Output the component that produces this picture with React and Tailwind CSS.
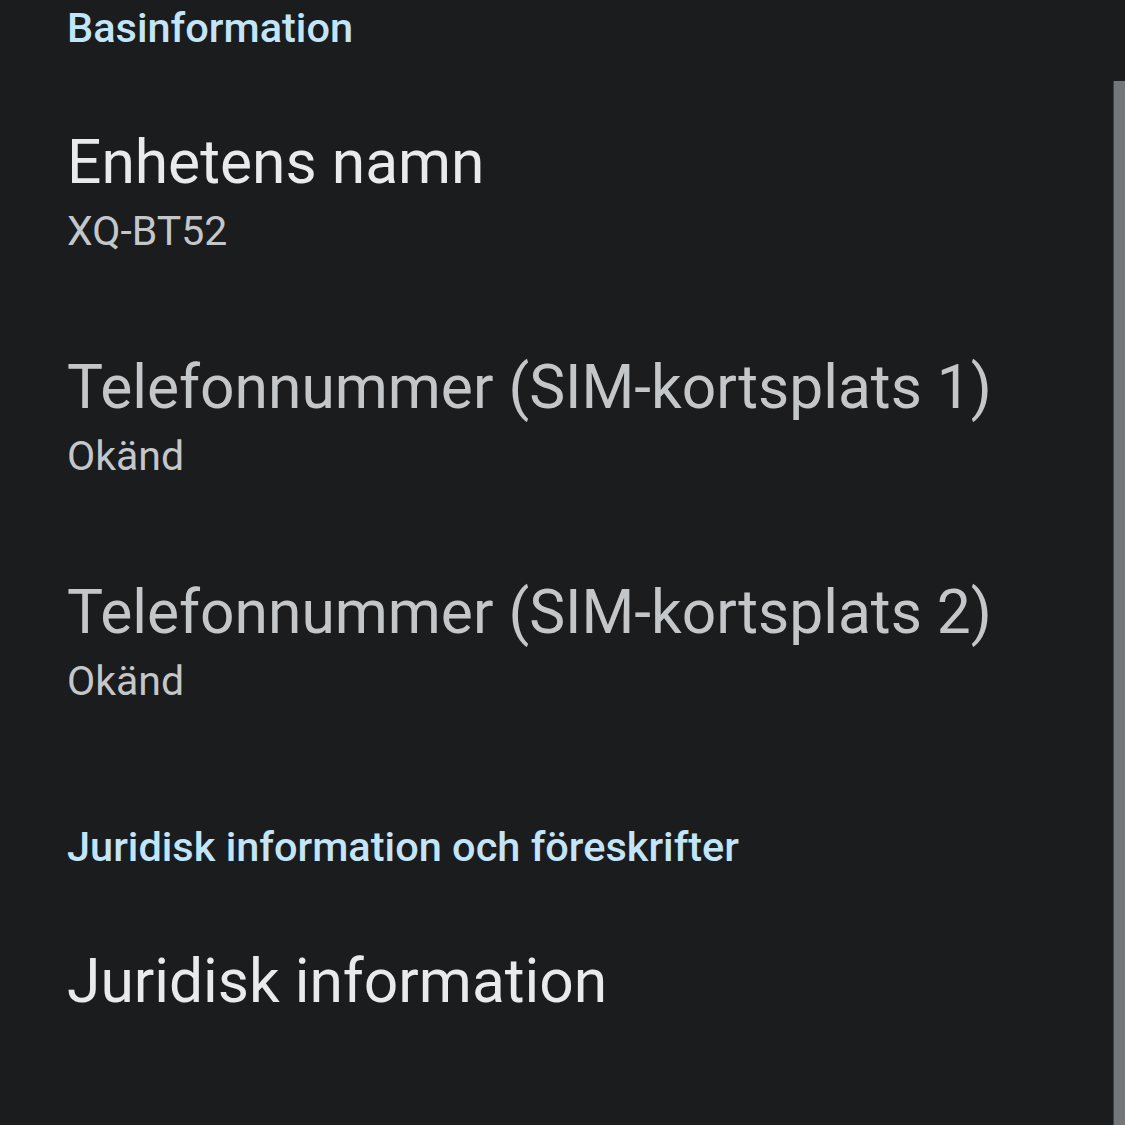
import React from "react";

const Header = ({ children, className = "" }) => (
  <div className={`text-[41.5px] leading-[41px] font-medium text-[#c3e5fa] ${className}`}>
    {children}
  </div>
);

const Item = ({ title, summary, dim, className = "" }) => (
  <div className={className}>
    <div
      className={`text-[60.5px] leading-[60px] ${dim ? "text-[#c4c7ca]" : "text-[#e9eaeb]"}`}
    >
      {title}
    </div>
    {summary && (
      <div className="mt-[18px] text-[41px] leading-[41px] text-[#c4c7ca]">{summary}</div>
    )}
  </div>
);

export default function App() {
  return (
    <div
      className="flex h-[1125px] w-[1125px] overflow-hidden bg-[#1b1c1e]"
      style={{ fontFamily: "Roboto, 'Liberation Sans', sans-serif" }}
    >
      <div className="flex flex-1 flex-col pl-[67px] pt-[7px]">
        <Header>Basinformation</Header>
        <Item className="mt-[85px]" title="Enhetens namn" summary="XQ-BT52" />
        <Item className="mt-[106px]" title="Telefonnummer (SIM-kortsplats 1)" summary="Okänd" dim />
        <Item className="mt-[106px]" title="Telefonnummer (SIM-kortsplats 2)" summary="Okänd" dim />
        <Header className="mt-[124px]">Juridisk information och föreskrifter</Header>
        <Item className="mt-[85px]" title="Juridisk information" />
      </div>
      <div className="flex w-[12px] flex-col">
        <div className="h-[81px]" />
        <div className="flex-1 border-l border-[#3d4043] bg-[#72777b]" />
      </div>
    </div>
  );
}
